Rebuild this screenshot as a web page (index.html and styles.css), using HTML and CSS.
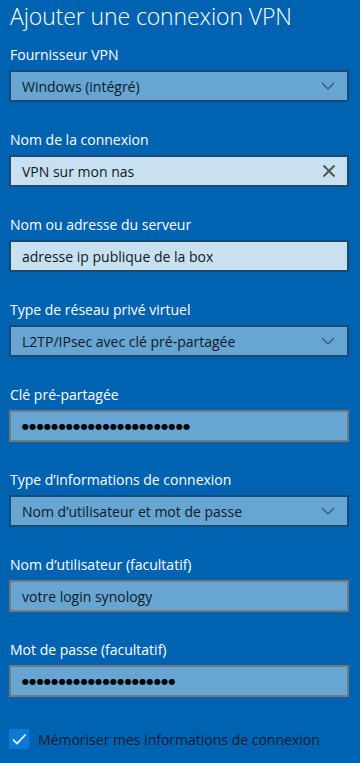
FILE: index.html
```html
<!DOCTYPE html>
<html lang="fr">
<head>
  <meta charset="UTF-8">
  <meta name="viewport" content="width=device-width, initial-scale=1.0">
  <title>Ajouter une connexion VPN</title>
  <link rel="stylesheet" href="styles.css">
</head>
<body>
  <h1>Ajouter une connexion VPN</h1>

  <div class="field first">
    <div class="label">Fournisseur VPN</div>
    <div class="box select">
      <span class="value">Windows (intégré)</span>
      <svg class="chevron" width="14" height="8" viewBox="0 0 14 8"><path d="M1 1 L7 7 L13 1" fill="none" stroke="#2f5478" stroke-width="1.2"/></svg>
    </div>
  </div>

  <div class="field">
    <div class="label">Nom de la connexion</div>
    <div class="box text focus">
      <span class="value">VPN sur mon nas</span>
      <svg class="clear" width="14" height="14" viewBox="0 0 14 14"><path d="M1.5 1.5 L12.5 12.5 M12.5 1.5 L1.5 12.5" fill="none" stroke="#555" stroke-width="2"/></svg>
    </div>
  </div>

  <div class="field">
    <div class="label">Nom ou adresse du serveur</div>
    <div class="box text focus">
      <span class="value">adresse ip publique de la box</span>
    </div>
  </div>

  <div class="field">
    <div class="label">Type de réseau privé virtuel</div>
    <div class="box select">
      <span class="value">L2TP/IPsec avec clé pré-partagée</span>
      <svg class="chevron" width="14" height="8" viewBox="0 0 14 8"><path d="M1 1 L7 7 L13 1" fill="none" stroke="#2f5478" stroke-width="1.2"/></svg>
    </div>
  </div>

  <div class="field">
    <div class="label">Clé pré-partagée</div>
    <div class="box text">
      <span class="dots">●●●●●●●●●●●●●●●●●●●●●●●</span>
    </div>
  </div>

  <div class="field">
    <div class="label">Type d’informations de connexion</div>
    <div class="box select">
      <span class="value">Nom d’utilisateur et mot de passe</span>
      <svg class="chevron" width="14" height="8" viewBox="0 0 14 8"><path d="M1 1 L7 7 L13 1" fill="none" stroke="#2f5478" stroke-width="1.2"/></svg>
    </div>
  </div>

  <div class="field">
    <div class="label">Nom d’utilisateur (facultatif)</div>
    <div class="box text">
      <span class="value">votre login synology</span>
    </div>
  </div>

  <div class="field">
    <div class="label">Mot de passe (facultatif)</div>
    <div class="box text">
      <span class="dots">●●●●●●●●●●●●●●●●●●●●●</span>
    </div>
  </div>

  <div class="remember">
    <span class="check">
      <svg width="20" height="20" viewBox="0 0 20 20"><path d="M4 10.5 L8 14.5 L16.5 5.5" fill="none" stroke="#fff" stroke-width="1.6"/></svg>
    </span>
    <span class="remember-text">Mémoriser mes informations de connexion</span>
  </div>
</body>
</html>
```

FILE: styles.css
```css
/* Fond bleu façon paramètres Windows */
body {
  margin: 0;
  padding: 0 11px 0 9px;
  background: #0063b1;
  color: #fff;
  font-family: 'Open Sans', 'Noto Sans', sans-serif;
  font-size: 14px;
  overflow: hidden;
}
h1 {
  margin: 0;
  padding-left: 1px;
  font-size: 23px;
  font-weight: 300;
  line-height: 32px;
  letter-spacing: -0.1px;
}
.field {
  margin-top: 28px;
}
.field.first {
  margin-top: 13px;
}
.label {
  padding-left: 1px;
  line-height: 20px;
  margin-bottom: 5px;
}
/* Champs : 340 × 32 px, bordure de 2 px */
.box {
  box-sizing: border-box;
  height: 32px;
  border: 2px solid #1a4a73;
  background: #67a5d3;
  color: #0b1a28;
  display: flex;
  align-items: center;
  padding: 0 10px 0 11px;
}
.box.text {
  border-color: #787878;
}
.box.focus {
  background: #c9e0f0;
  border-color: #1a4a73;
}
.box .value {
  flex: 1;
}
.chevron {
  margin-right: 2px;
}
.clear {
  margin-right: 1px;
}
.dots {
  font-family: 'DejaVu Sans', sans-serif;
  font-size: 8px;
  letter-spacing: 0.35px;
  color: #000;
}
.remember {
  margin-top: 32px;
  display: flex;
  align-items: center;
  gap: 9px;
}
.check {
  width: 20px;
  height: 20px;
  background: #0b7ad6;
  display: flex;
}
.remember-text {
  color: #0a1c2e;
}
```
